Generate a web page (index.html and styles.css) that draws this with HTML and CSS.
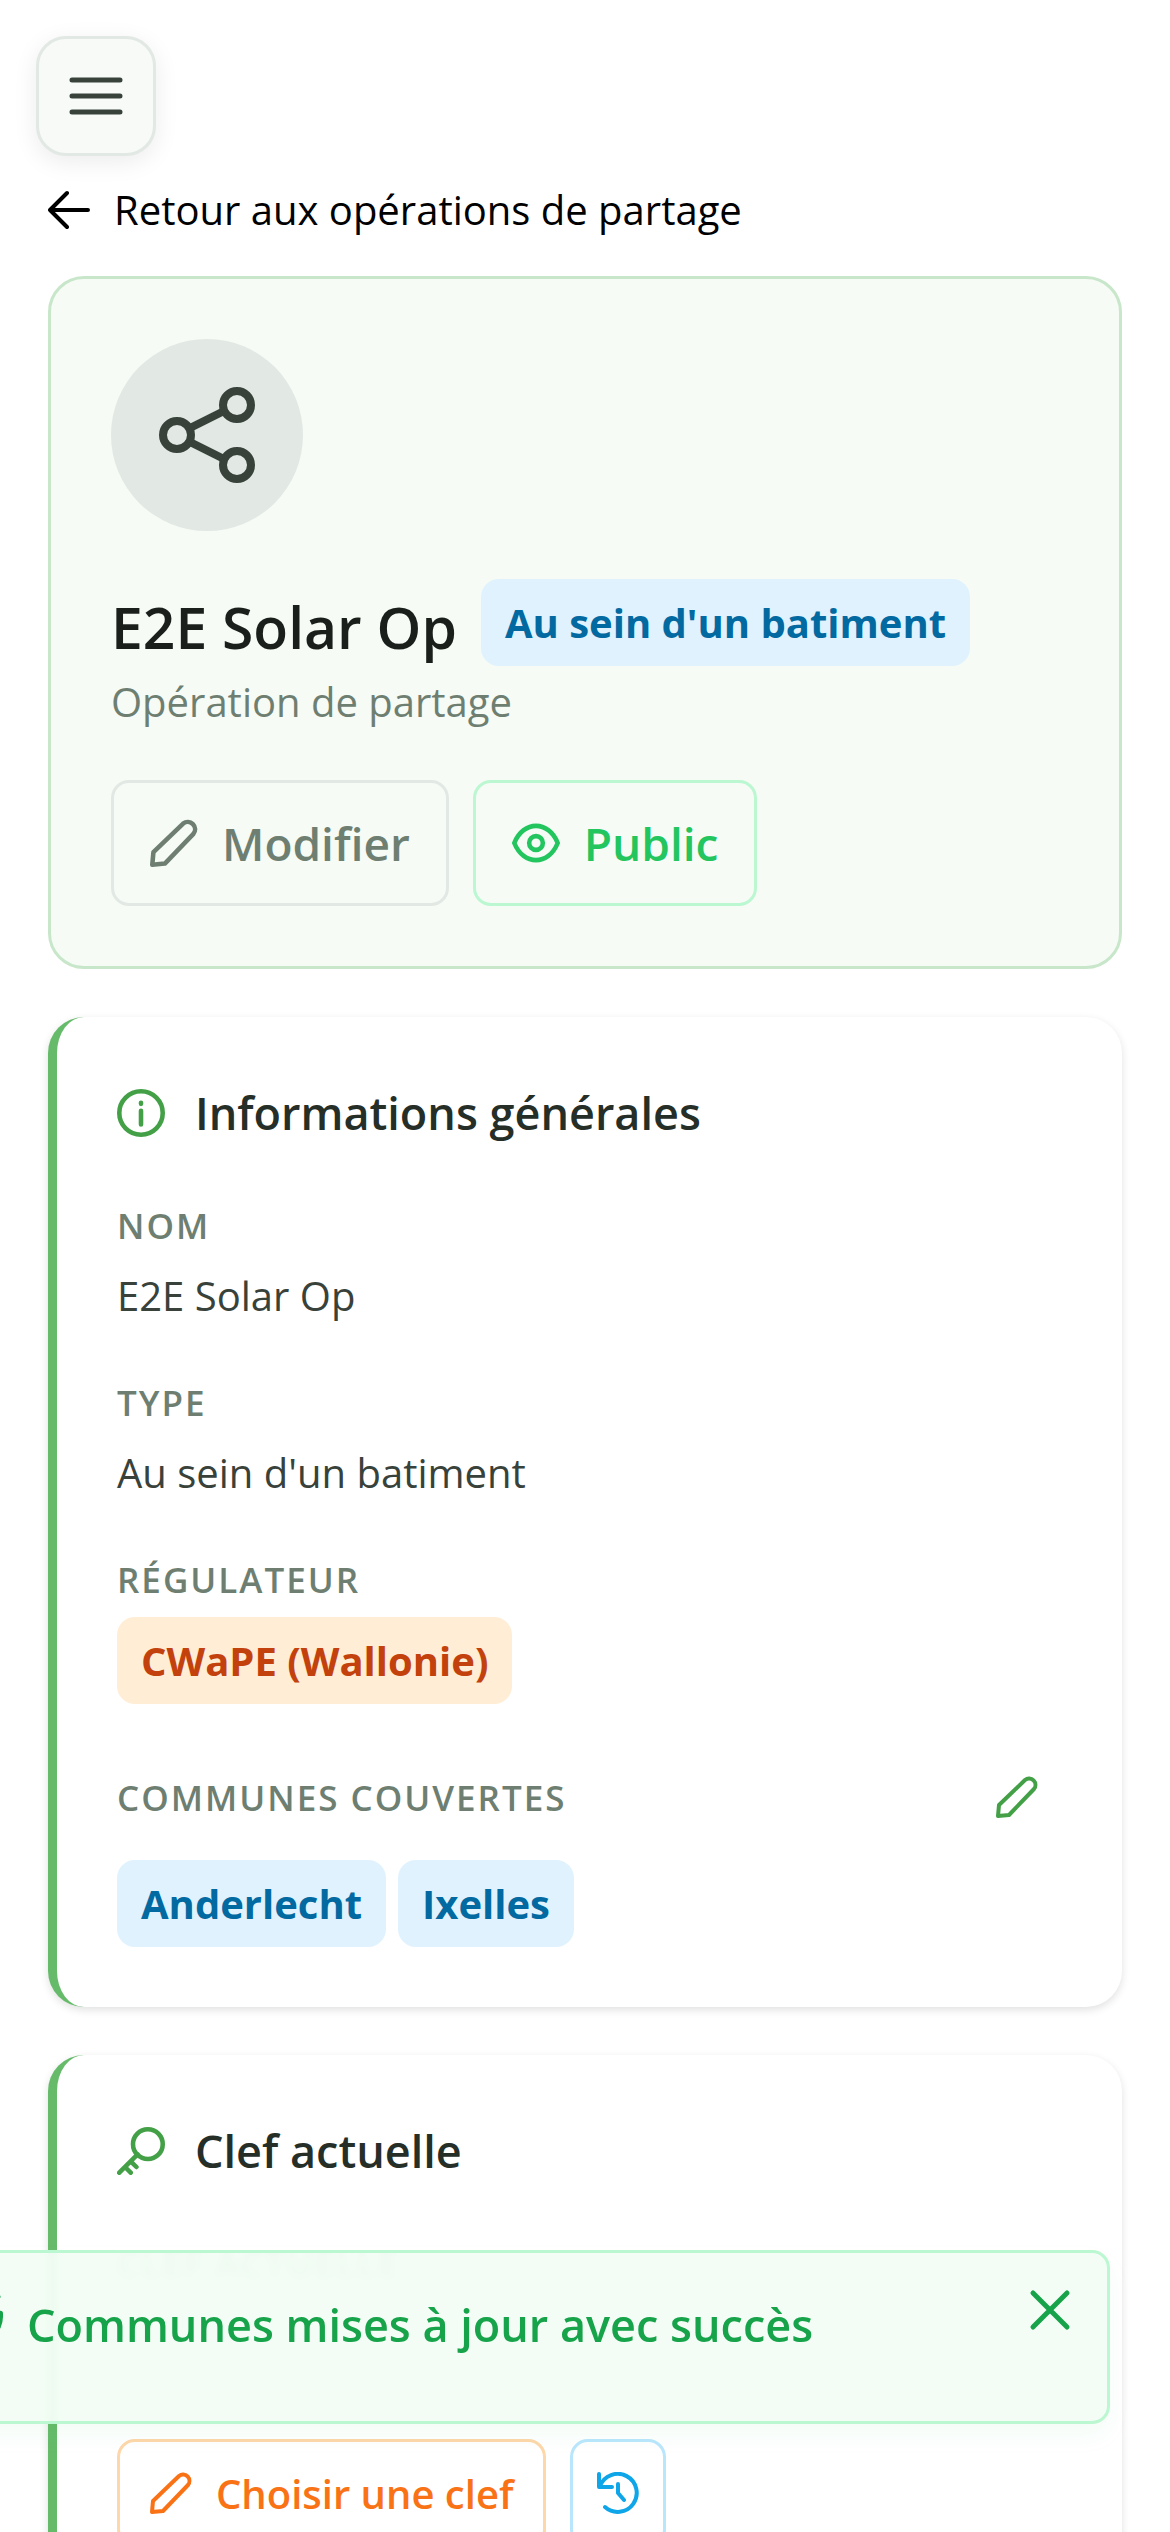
FILE: index.html
```
<!DOCTYPE html>
<html lang="fr">
<head>
  <meta charset="UTF-8">
  <meta name="viewport" content="width=device-width, initial-scale=1">
  <title>E2E Solar Op</title>
  <link rel="stylesheet" href="styles.css">
</head>
<body>

  <header class="topbar">
    <button class="menu-button" aria-label="Menu">
      <svg viewBox="0 0 54 54"><path d="M3 11h48M3 27h48M3 43h48"/></svg>
    </button>
  </header>

  <main class="page">
    <a href="#" class="back-link">
      <svg class="icon" viewBox="0 0 42 42"><path d="M2 21h38M19 4L2 21l17 17"/></svg>
      Retour aux opérations de partage
    </a>

    <section class="hero">
      <div class="avatar">
        <svg viewBox="0 0 96 96">
          <circle cx="18" cy="48" r="14"/>
          <circle cx="78" cy="18" r="14"/>
          <circle cx="78" cy="78" r="14"/>
          <path d="M31 41l34-17M31 55l34 17"/>
        </svg>
      </div>
      <div class="title-row">
        <h1>E2E Solar Op</h1>
        <span class="badge">Au sein d'un batiment</span>
      </div>
      <p class="subtitle">Opération de partage</p>
      <div class="actions">
        <button class="btn btn-grey">
          <svg class="icon" viewBox="0 0 42 42"><path d="M2 40l1-11L29 4a6.400 6.400 0 0 1 9 9L13 39z"/></svg>
          Modifier
        </button>
        <button class="btn btn-green">
          <svg class="icon" viewBox="0 0 42 42"><path d="M2 21C10 1 32 1 40 21C32 41 10 41 2 21z"/><circle cx="21" cy="21" r="6"/></svg>
          Public
        </button>
      </div>
    </section>

    <section class="card">
      <h2>
        <svg class="icon" viewBox="0 0 42 42"><circle cx="21" cy="21" r="19"/><path d="M21 19v12M21 12v1"/></svg>
        Informations générales
      </h2>
      <dl class="fields">
        <div class="field">
          <dt>Nom</dt>
          <dd>E2E Solar Op</dd>
        </div>
        <div class="field">
          <dt>Type</dt>
          <dd>Au sein d'un batiment</dd>
        </div>
        <div class="field">
          <dt class="with-badge">Régulateur</dt>
          <dd><span class="badge badge-orange">CWaPE (Wallonie)</span></dd>
        </div>
        <div class="field">
          <dt class="with-action">
            Communes couvertes
            <button class="edit-button" aria-label="Modifier les communes">
              <svg class="icon" viewBox="0 0 42 42"><path d="M2 40l1-11L29 4a6.400 6.400 0 0 1 9 9L13 39z"/></svg>
            </button>
          </dt>
          <dd class="badges">
            <span class="badge">Anderlecht</span>
            <span class="badge">Ixelles</span>
          </dd>
        </div>
      </dl>
    </section>

    <section class="card">
      <h2>
        <svg class="icon" viewBox="0 0 42 42"><circle cx="27" cy="15" r="13"/><path d="M18 24L2 40M12 30l5 5M7 35l5 5"/></svg>
        Clef actuelle
      </h2>
      <dl class="fields">
        <div class="field">
          <dt>Clef actuelle</dt>
          <dd></dd>
        </div>
      </dl>
      <div class="key-actions">
        <button class="btn btn-small btn-orange">
          <svg class="icon" viewBox="0 0 42 42"><path d="M2 40l1-11L29 4a6.400 6.400 0 0 1 9 9L13 39z"/></svg>
          Choisir une clef
        </button>
        <button class="btn btn-small btn-blue" aria-label="Historique">
          <svg class="icon" viewBox="0 0 42 42"><path d="M2 2v13h13M3 14A19 19 0 1 1 8 35M21 12v9l6 7"/></svg>
        </button>
      </div>
    </section>
  </main>

  <div class="toast" role="alert">
    <svg class="icon toast-icon" viewBox="0 0 42 42"><path d="M40 19v2a19 19 0 1 1-11-17M38 6L21 24l-6-6"/></svg>
    <p>Communes mises à jour avec succès</p>
    <button class="toast-close" aria-label="Fermer">
      <svg class="icon" viewBox="0 0 42 42"><path d="M4 4l34 34M38 4L4 38"/></svg>
    </button>
  </div>

</body>
</html>
```
FILE: styles.css
```
* {
  box-sizing: border-box;
}
body {
  margin: 0;
  font-family: "Open Sans", "Noto Sans", sans-serif;
  font-size: 40px;
  line-height: 60px;
  color: #38423b;
  background-color: #fff;
  height: 100vh;
  overflow: hidden;
}
h1, h2, p, dl, dd {
  margin: 0;
}
button {
  font-family: inherit;
  cursor: pointer;
}
svg {
  display: block;
  fill: none;
  stroke: currentColor;
  stroke-linecap: round;
  stroke-linejoin: round;
}
.icon {
  width: 42px;
  height: 42px;
  stroke-width: 4;
  flex: none;
}
.topbar {
  padding: 36px 36px 0;
}
.menu-button {
  display: flex;
  align-items: center;
  justify-content: center;
  width: 120px;
  height: 120px;
  padding: 0;
  color: #38423b;
  background-color: #f8faf8;
  border: 3px solid #e2e8e3;
  border-radius: 30px;
  box-shadow: 0 6px 24px rgba(0,0,0,0.08);
}
.menu-button svg {
  width: 54px;
  height: 54px;
  stroke-width: 5;
}
.page {
  padding: 24px 48px;
}
.back-link {
  display: flex;
  align-items: center;
  gap: 24px;
  color: #000;
  text-decoration: none;
}
.hero {
  margin-top: 36px;
  padding: 60px;
  background-color: #f6fbf6;
  border: 3px solid #c8e6c9;
  border-radius: 36px;
}
.avatar {
  display: flex;
  align-items: center;
  justify-content: center;
  width: 192px;
  height: 192px;
  color: #38423b;
  background-color: #e2e8e3;
  border-radius: 50%;
}
.avatar svg {
  width: 96px;
  height: 96px;
  stroke-width: 8;
}
.title-row {
  display: flex;
  align-items: flex-start;
  gap: 24px;
  margin-top: 48px;
}
h1 {
  padding-top: 9px;
  font-size: 57px;
  line-height: 78px;
  font-weight: 600;
  color: #1a1f1b;
}
.badge {
  display: inline-block;
  padding: 12px 24px;
  font-size: 40px;
  line-height: 63px;
  font-weight: 700;
  color: #0369a1;
  background-color: #e0f2fe;
  border-radius: 18px;
}
.badge-orange {
  color: #c2410c;
  background-color: #ffedd5;
}
.subtitle {
  margin-top: 6px;
  color: #6e7f72;
}
.actions {
  display: flex;
  gap: 24px;
  margin-top: 48px;
}
.btn {
  display: flex;
  align-items: center;
  gap: 24px;
  height: 126px;
  padding: 0 36px;
  font-size: 46px;
  font-weight: 600;
  background-color: transparent;
  border: 3px solid;
  border-radius: 18px;
}
.btn .icon {
  width: 48px;
  height: 48px;
}
.btn-grey {
  color: #6e7f72;
  border-color: #e2e8e3;
}
.btn-green {
  color: #22c55e;
  border-color: #bbf7d0;
}
.card {
  margin-top: 48px;
  padding: 60px;
  background-color: #fff;
  border-left: 9px solid #66bb6a;
  border-radius: 36px;
  box-shadow: 0 3px 9px rgba(0,0,0,0.12);
}
h2 {
  display: flex;
  align-items: center;
  gap: 30px;
  font-size: 45px;
  line-height: 72px;
  font-weight: 600;
  color: #262e28;
}
h2 .icon {
  width: 48px;
  height: 48px;
  color: #43a047;
}
.fields {
  display: grid;
  gap: 48px;
  margin-top: 48px;
}
dt {
  margin-bottom: 12px;
  font-size: 35px;
  line-height: 57px;
  font-weight: 600;
  text-transform: uppercase;
  letter-spacing: 2px;
  color: #6e7f72;
}
dd {
  min-height: 60px;
}
.with-badge {
  margin-bottom: 9px;
}
.with-action {
  display: flex;
  align-items: center;
  justify-content: space-between;
  margin-bottom: 18px;
}
.edit-button {
  padding: 24px;
  color: #43a047;
  background: none;
  border: none;
}
.badges {
  display: flex;
  gap: 12px;
}
.key-actions {
  display: flex;
  gap: 24px;
  margin-top: 75px;
}
.btn-small {
  height: 108px;
  padding: 0 30px;
  font-size: 40px;
}
.btn-small .icon {
  width: 42px;
  height: 42px;
}
.btn-orange {
  color: #f97316;
  border-color: #fed7aa;
}
.btn-blue {
  padding: 0 24px;
  color: #0ea5e9;
  border-color: #bae6fd;
}
.toast {
  position: fixed;
  right: 60px;
  bottom: 108px;
  display: flex;
  align-items: flex-start;
  gap: 24px;
  width: 1200px;
  height: 174px;
  padding: 36px;
  color: #16a34a;
  background-color: rgba(242,253,245,0.96);
  backdrop-filter: blur(5px);
  border: 3px solid #bbf7d0;
  border-radius: 18px;
  box-shadow: 0 12px 24px rgba(34,197,94,0.05);
}
.toast p {
  flex: 1;
  font-size: 45px;
  line-height: 72px;
  font-weight: 600;
}
.toast-icon {
  width: 54px;
  height: 54px;
}
.toast-close {
  padding: 0;
  color: inherit;
  background: none;
  border: none;
}
.toast-close .icon {
  stroke-width: 5;
}
```
